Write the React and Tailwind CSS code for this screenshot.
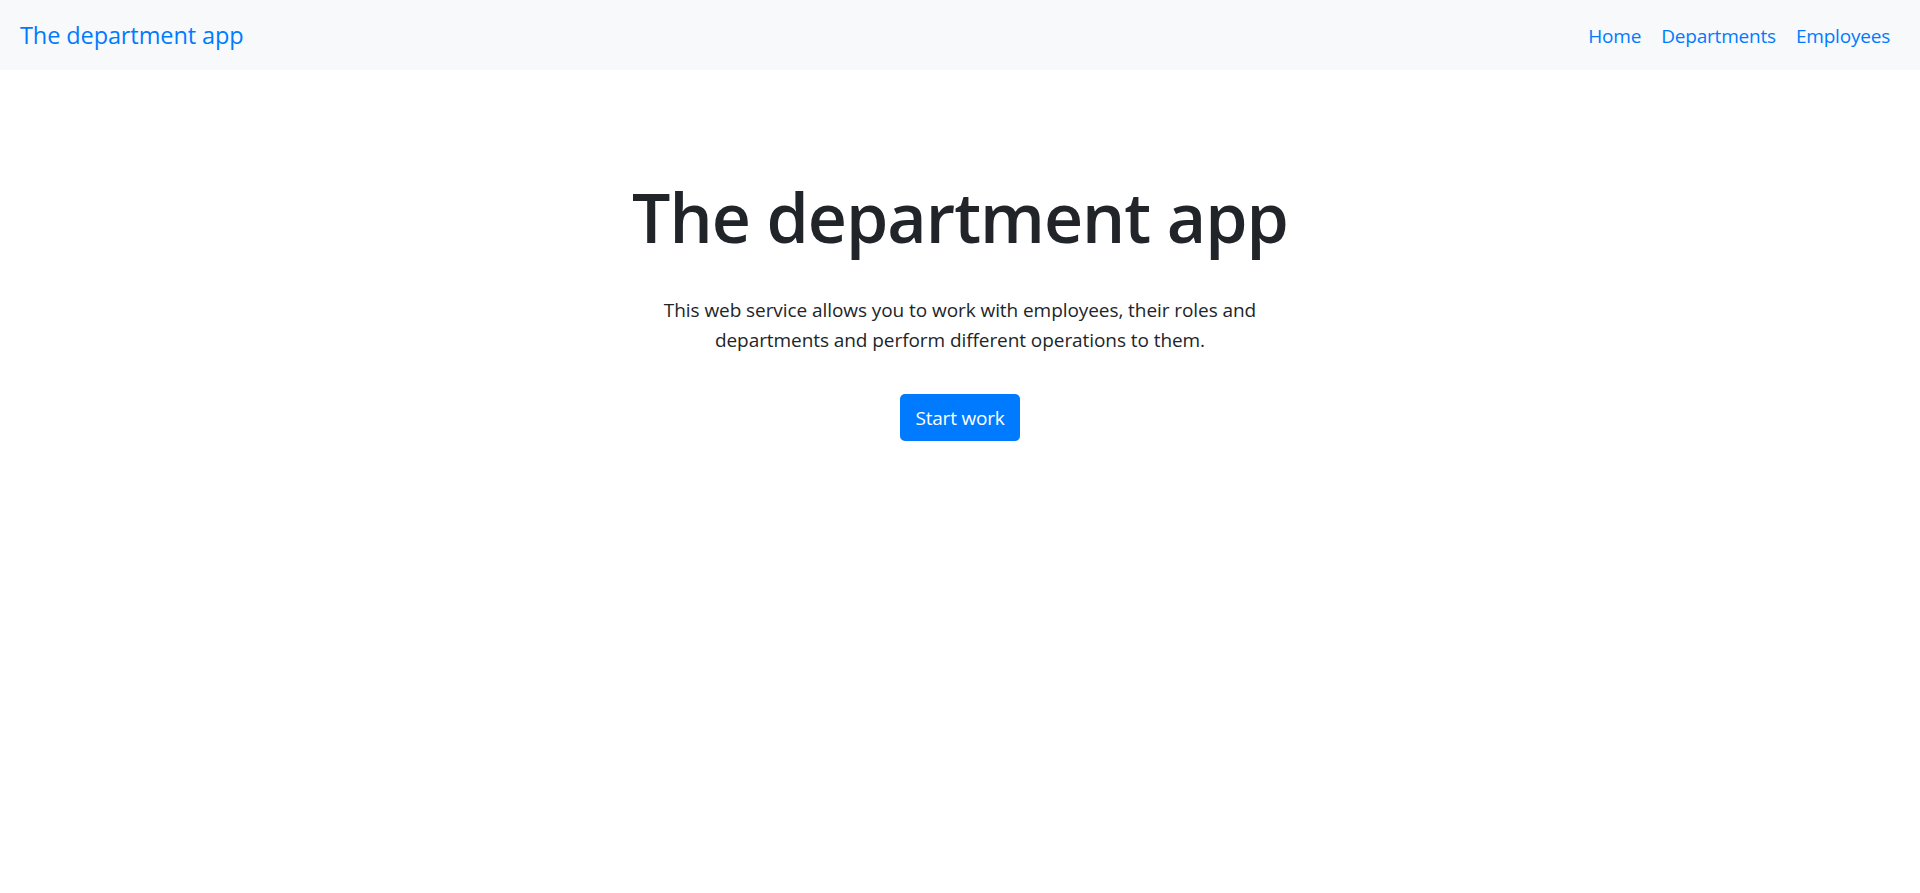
export default function App() {
  const links = ['Home', 'Departments', 'Employees']
  return (
    <div className="min-h-screen bg-white text-[#212529]" style={{ fontFamily: '"Open Sans", "Noto Sans", sans-serif' }}>
      <nav className="flex h-[70px] items-center justify-between bg-[#f8f9fa] px-[20px]">
        <a href="#" className="text-[23.5px] leading-[37px] tracking-[-0.1px] text-[#007bff]">The department app</a>
        <ul className="flex items-center pt-[2px]">
          {links.map((l) => (
            <li key={l}>
              <a href="#" className="block px-[10px] text-[19px] leading-[30px] tracking-[-0.2px] text-[#007bff]">{l}</a>
            </li>
          ))}
        </ul>
      </nav>
      <main className="flex flex-col items-center pt-[105px] text-center">
        <h1 className="text-[68px] font-semibold leading-[84px] tracking-[-1px]">The department app</h1>
        <p className="mt-[36px] max-w-[620px] text-[19px] leading-[30px] tracking-[-0.07px]">
          This web service allows you to work with employees, their roles and departments and perform different operations to them.
        </p>
        <button className="mt-[39px] h-[47px] rounded-[5px] bg-[#007bff] px-[15px] text-[19px] leading-[30px] tracking-[-0.2px] text-white">
          Start work
        </button>
      </main>
    </div>
  )
}
